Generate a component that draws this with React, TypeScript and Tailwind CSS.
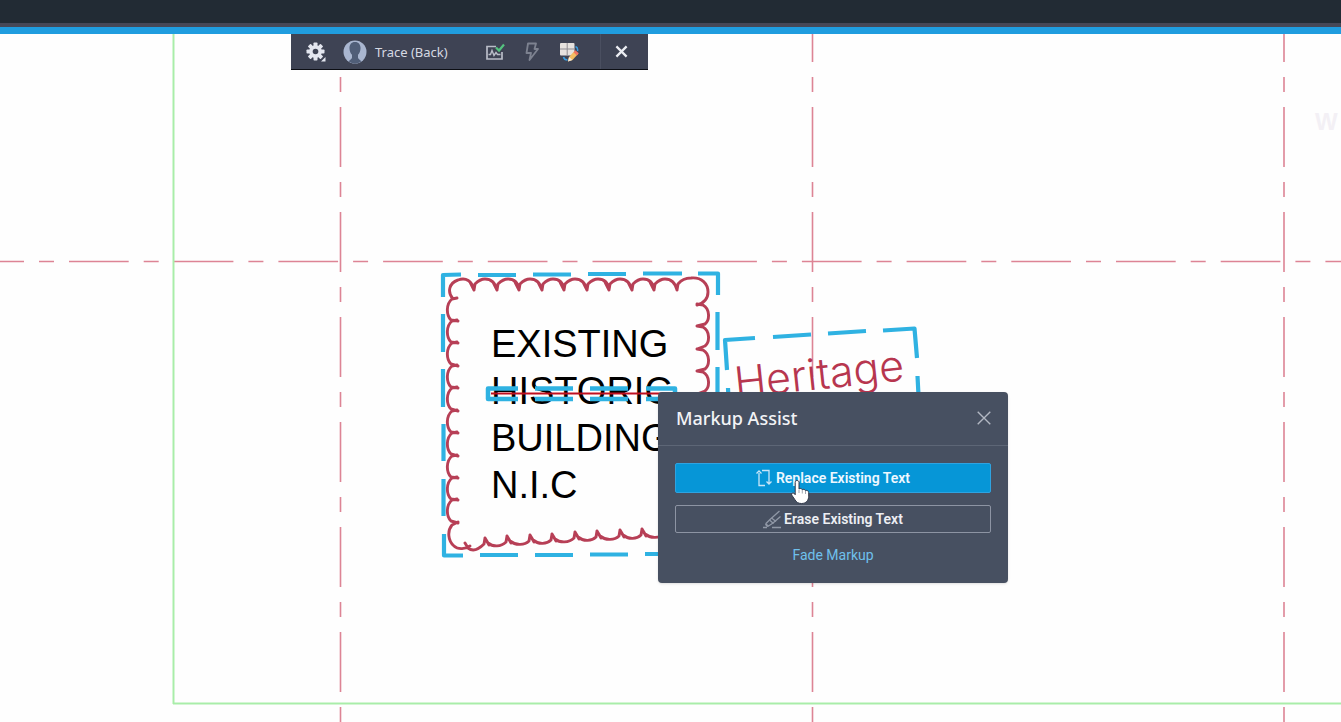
import React from "react";

const TOP_CUSPS = [474, 497, 519, 542, 564, 587, 609, 632, 654, 677];
const LEFT_CUSPS = [299, 321, 343, 366, 388, 411, 433, 456, 478, 500, 523];
const RIGHT_CUSPS = [304, 326, 349, 371, 394];
const BOTTOM_CUSPS: [number, number][] = [
  [466, 544], [486, 539], [508, 537], [531, 536], [553, 535],
  [576, 533], [598, 532], [621, 531], [643, 530], [666, 529],
];

function cloudPath(): string {
  const parts: string[] = [];
  parts.push("M453 299 C447 292 449 283 458 280 C466 277 472 281 474 290");
  TOP_CUSPS.slice(0, -1).forEach((x, i) => {
    const next = TOP_CUSPS[i + 1];
    parts.push(`M${x - 4} 282 L${x} 290 L${x + 1} 284 C${x + 5} 280 ${x + 8} 279 ${x + 11} 279 C${x + 17} 279 ${x + 21} 282 ${next} 290`);
  });
  parts.push("M677 290 L678 284 C682 279 686 278 691 278 C702 277 708 284 708 292 C708 299 704 303 697 305");
  LEFT_CUSPS.slice(0, -1).forEach((y, i) => {
    const next = LEFT_CUSPS[i + 1];
    parts.push(`M457 ${y - 1} L452 ${y} C446 ${y + 5} 446 ${y + 16} 451 ${y + 21} L458 ${next}`);
  });
  RIGHT_CUSPS.slice(0, -1).forEach((y, i) => {
    const next = RIGHT_CUSPS[i + 1];
    parts.push(`M697 ${y} L703 ${y + 1} C710 ${y + 5} 710 ${y + 16} 705 ${y + 20} L697 ${next}`);
  });
  parts.push("M458 522 L452 525 C447 531 448 541 454 546 C458 550 466 549 470 546");
  BOTTOM_CUSPS.slice(0, -1).forEach(([x, y], i) => {
    const [nx, ny] = BOTTOM_CUSPS[i + 1];
    parts.push(`M${x - 1} ${y - 1} L${x + 2} ${y + 4} C${x + 7} ${y + 8} ${nx - 7} ${ny + 10} ${nx - 2} ${ny + 5} L${nx - 1} ${ny - 1} L${nx + 3} ${ny + 6}`);
  });
  return parts.join(" ");
}

const CLOUD_SELECTION =
  "M443 297V275L461 274.5 M478 275H516 M533 274.5H571 M588 274H626 M643 273.5H682 M698 273.5H718V295 " +
  "M443 314V352 M443 369V407 M443.500 424V461 M443.500 479V516 M444 534V555.500H463 M480 555H518 " +
  "M535 555H573 M590 554.500H628 M645 554H683 M717.500 312V350 M717.500 367V405";

const STRIKE_SELECTION =
  "M518 388.500H488V399H518 M535 388.500H573 M535 399H573 M590 388.500H628 M590 399H628 M646 388.500H675V399H646";

const NOTE_SELECTION =
  "M727 370L725 340L755 338 M773 337L811 334.500 M828 333.500L866 331 M883 330.500L914.500 328.500L917 358 M728 388L729 410 M917.500 376L919 405";

function Drawing() {
  return (
    <svg className="absolute inset-0 h-full w-full" aria-hidden="true">
      <g transform="translate(0 -34)" fill="none">
        <g stroke="#dd8495" strokeWidth="1.600">
          {[340.5, 812.5, 1284].map((x) => (
            <path key={x} d={`M${x} 2V2000`} strokeDasharray="60 15 15 15" />
          ))}
          <line x1="-35.700" y1="261.500" x2="100%" y2="261.500" strokeDasharray="59.700 15 15 15" />
        </g>
        <g stroke="#a9eda9" strokeWidth="2">
          <line x1="173.500" y1="34" x2="173.500" y2="704" />
          <line x1="173" y1="703.500" x2="100%" y2="703.500" />
        </g>
        <path d={cloudPath()} stroke="#b73f56" strokeWidth="2.900" strokeLinecap="round" strokeLinejoin="round" />
        <g stroke="#2fb2e2" strokeWidth="4.200" strokeLinejoin="round">
          <path d={CLOUD_SELECTION} />
          <path d={NOTE_SELECTION} />
        </g>
      </g>
    </svg>
  );
}

function StrikeMark() {
  return (
    <svg className="absolute inset-0 h-full w-full" aria-hidden="true">
      <g transform="translate(0 -34)" fill="none">
        <path d={STRIKE_SELECTION} stroke="#2fb2e2" strokeWidth="4.500" strokeLinejoin="round" />
        <path d="M491 393.500H672" stroke="#c01020" strokeWidth="2.200" />
      </g>
    </svg>
  );
}

function GearIcon() {
  return (
    <svg width="22" height="22" viewBox="0 0 22 22" aria-hidden="true">
      <g transform="translate(10.500 10.500)">
        {[0, 45, 90, 135].map((a) => (
          <rect key={a} x="-2" y="-9" width="4" height="18" rx="0.800" fill="#e3e6ef" transform={`rotate(${a})`} />
        ))}
        <circle r="6.300" fill="#e3e6ef" />
        <circle r="2.800" fill="#3e4354" />
      </g>
      <path d="M20.500 16v4.500H16z" fill="#e3e6ef" />
    </svg>
  );
}

function AvatarIcon() {
  return (
    <svg width="24" height="24" viewBox="0 0 24 24" aria-hidden="true">
      <circle cx="12" cy="12" r="11.500" fill="#a9b6d0" />
      <path d="M12 2c-4 0-5.700 3-5.500 6.500.1 3 1.200 5 2.500 6.300v3c-.5 1.500-2 2.300-3.500 3.500A11.500 11.500 0 0 0 18.500 21.300c-1.500-1.200-3-2-3.500-3.500v-3c1.300-1.300 2.400-3.300 2.500-6.300C17.700 5 16 2 12 2z" fill="#505e78" />
    </svg>
  );
}

function TraceCheckIcon() {
  return (
    <svg width="20" height="18" viewBox="0 0 20 18" fill="none" aria-hidden="true">
      <path d="M11 3.500H2v12.500h15V9" stroke="#b9bdc8" strokeWidth="1.700" />
      <path d="M3.500 11.500h2l1.500-4 2 5 2-3 1.500 2h3" stroke="#b9bdc8" strokeWidth="1.400" />
      <path d="M11 4.500l3 3L19 1.500" stroke="#54c27f" strokeWidth="2.200" />
    </svg>
  );
}

function BoltIcon() {
  return (
    <svg width="14" height="20" viewBox="0 0 14 20" fill="none" aria-hidden="true">
      <path d="M3 1.500h8L9.500 7H13L4.500 18 6 11H1.500z" stroke="#7d8290" strokeWidth="1.800" strokeLinejoin="round" />
    </svg>
  );
}

function TableEditIcon() {
  return (
    <svg width="20" height="20" viewBox="0 0 20 20" fill="none" aria-hidden="true">
      <rect x="1" y="1" width="14.500" height="12.500" rx="1" fill="#e6e2df" />
      <path d="M8.200 1v12.500M1 7h14.500" stroke="#8e8c92" strokeWidth="1" />
      <path d="M16.500 4.500c2 1 2.500 2.500 2 4.500M4.500 15c.5 2 2 3 4 3" stroke="#3a9de0" strokeWidth="1.500" />
      <path d="M9 19.500l1-4.500 5.500-6 3.500 3-5.500 6z" fill="#f3bd62" />
      <path d="M14.500 10.200L16.300 8.200l3.500 3-1.900 2.200z" fill="#ef7462" />
      <path d="M9 19.500l1-4.500 3.500 3z" fill="#f5ead9" />
    </svg>
  );
}

function CrossIcon({ size, width, color }: { size: number; width: number; color: string }) {
  return (
    <svg width={size} height={size} viewBox="0 0 14 14" fill="none" aria-hidden="true">
      <path d="M1.500 1.500l11 11M12.500 1.500l-11 11" stroke={color} strokeWidth={width} />
    </svg>
  );
}

function ReplaceIcon() {
  return (
    <svg width="16" height="18" viewBox="0 0 16 18" fill="none" stroke="#c9e6f8" strokeWidth="1.300" aria-hidden="true">
      <path d="M3 4V16.500h6M.5 4.500L3 2l2.500 2.500" />
      <path d="M6 1.500h7V15M10.500 12.500L13 15l2.500-2.500" />
    </svg>
  );
}

function EraserIcon() {
  return (
    <svg width="19" height="19" viewBox="0 0 19 19" fill="none" stroke="#9098a6" strokeWidth="1.300" aria-hidden="true">
      <path d="M16.500 1L7 9.500l-4 4c-.7 1 .9 3.500 2.500 2.500L10 13l7.500-6.500" />
      <path d="M6.500 10l4 3.500M8.500 8l4.500 3.500M2.800 14l2.700 2" />
      <path d="M0 17.500h4M9 17.500h9" />
    </svg>
  );
}

function HandCursor() {
  return (
    <svg className="pointer-events-none absolute left-[132px] top-[86px]" width="21" height="27" viewBox="0 0 21 27" aria-hidden="true">
      <path
        d="M7 2.500c1.300 0 2 .8 2 2V11c.5-.8 2.900-.8 3.300.7.900-.7 2.700-.4 3.200.9 1.500-.6 3.200.3 3.200 2.100v3.500c0 4-2.500 7.300-7.200 7.300-3.500 0-5.300-1.500-6.700-4L1.700 17c-.8-1.600 1.300-2.900 2.500-1.500l1 1.200V4.500c0-1.200.6-2 1.800-2z"
        fill="#fff" stroke="#30384a" strokeWidth="1"
      />
      <path d="M9 11.500V15M12.300 12V15.500M15.500 13V16" stroke="#8a909c" strokeWidth="0.800" />
    </svg>
  );
}

function TraceToolbar() {
  return (
    <div role="toolbar" aria-label="Trace" className="absolute left-[291px] top-0 flex h-9 w-[357px] items-center border-b border-[#0c0e14] bg-[#3e4354] pl-3.5">
      <button aria-label="Settings"><GearIcon /></button>
      <span className="ml-4 flex items-center gap-2">
        <AvatarIcon />
        <span className="w-[110px] font-['Noto_Sans',sans-serif] text-[13px] leading-5 text-[#d6d9e2]">Trace (Back)</span>
      </span>
      <button aria-label="Accept trace"><TraceCheckIcon /></button>
      <button aria-label="Quick action" className="ml-5"><BoltIcon /></button>
      <button aria-label="Edit table" className="ml-5"><TableEditIcon /></button>
      <span className="ml-auto flex h-full w-12 items-center border-l border-[#4a4f60] pl-3.5">
        <button aria-label="Close trace"><CrossIcon size={13} width={2.4} color="#eceef3" /></button>
      </span>
    </div>
  );
}

function MarkupAssist() {
  return (
    <section aria-labelledby="markup-assist-title" className="absolute left-[658px] top-[358px] w-[350px] rounded bg-[#475061] pb-[18px] font-['Noto_Sans',sans-serif] shadow-sm">
      <header className="flex h-[54px] items-center justify-between border-b border-[#5d6676] pb-0.5 pl-[18px] pr-4">
        <h2 id="markup-assist-title" className="text-lg font-medium leading-6 text-[#f2f3f6]">Markup Assist</h2>
        <button aria-label="Close"><CrossIcon size={16} width={1.2} color="#b3b8c3" /></button>
      </header>
      <div className="flex flex-col items-center px-[17px] pt-[17px]">
        <button className="flex h-[30px] w-full items-center justify-center gap-1 rounded-xs border border-[#2fa3e0] bg-[#0696d7] font-['Roboto',sans-serif] text-sm font-semibold text-[#eef8ff]">
          <ReplaceIcon />Replace Existing Text
        </button>
        <button className="mt-3 flex h-7 w-full items-center justify-center gap-0.5 rounded-xs border border-[#8d94a3] font-['Roboto',sans-serif] text-sm font-semibold text-[#eceef3]">
          <EraserIcon />Erase Existing Text
        </button>
        <button className="mt-3 font-['Roboto',sans-serif] text-sm leading-5 text-[#6fc0ec]">Fade Markup</button>
      </div>
      <HandCursor />
    </section>
  );
}

export default function App() {
  return (
    <div className="flex min-h-screen flex-col bg-[#fefefe]">
      <header className="h-[23px] bg-[#222b34]" />
      <div className="h-1 bg-[#464857]" />
      <div className="h-[7px] bg-[#209ddf]" />
      <main className="relative flex-1 overflow-hidden">
        <Drawing />
        <div className="absolute left-[491px] top-[287px] font-['Liberation_Sans',Arial,sans-serif] text-[38px] leading-[47px] text-black">
          <p>EXISTING</p>
          <p>HISTORIC</p>
          <p>BUILDING</p>
          <p>N.I.C</p>
        </div>
        <StrikeMark />
        <p className="absolute left-[737px] top-[322px] origin-bottom-left -rotate-6 font-['Inter',sans-serif] text-[43px] font-light leading-[52px] text-[#b7364f]">
          Heritage
        </p>
        <p className="absolute left-[1315px] top-[72px] font-['Liberation_Sans',Arial,sans-serif] text-2xl font-bold text-[#f3f0f5]">W</p>
        <TraceToolbar />
        <MarkupAssist />
      </main>
    </div>
  );
}
